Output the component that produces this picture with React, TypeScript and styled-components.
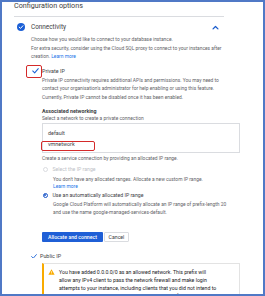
import React from "react";
import styled, { createGlobalStyle } from "styled-components";

const Global = createGlobalStyle`
  html, body { margin: 0; padding: 0; background: #fff; }
  body { font-family: Roboto, "Liberation Sans", Arial, sans-serif; }
  * { box-sizing: border-box; }
`;

const Frame = styled.div`
  width: 265px;
  height: 296px;
  border: 2px solid #5079c6;
  background: #fff;
  overflow: hidden;
  padding: 0 0 0 12px;
`;

const Title = styled.div`
  font-size: 7.2px;
  line-height: 8px;
  color: #3c4043;
  margin-top: 0;
`;

const Divider = styled.div`
  width: 210px;
  height: 1px;
  background: #dadce0;
  margin-top: 6px;
`;

const Section = styled.div`
  width: 210px;
  padding-left: 3px;
`;

const SectionHeader = styled.div`
  display: flex;
  align-items: center;
  height: 10px;
  margin-top: 5px;
  gap: 6px;
`;

const SectionTitle = styled.div`
  flex: 1;
  font-size: 6.4px;
  color: #3c4043;
`;

const Chevron = styled.svg`
  width: 7px;
  height: 5px;
  margin-right: 5px;
`;

const Body = styled.div`
  padding-left: 14px;
`;

const Desc = styled.div`
  font-size: 4.9px;
  line-height: 8.5px;
  color: #5f6368;
  margin-top: 3px;
  white-space: nowrap;
`;

const Link = styled.span`
  color: #1a73e8;
`;

const CheckRow = styled.div<{ $mt: number; $indent: number; $gap: number }>`
  position: relative;
  display: flex;
  align-items: center;
  height: 8px;
  margin-top: ${(p) => p.$mt}px;
  padding-left: ${(p) => p.$indent}px;
  gap: ${(p) => p.$gap}px;
  font-size: 5.4px;
  color: #3c4043;
`;

const Highlight = styled.div<{ $l: number; $t: number; $w: number; $h: number }>`
  position: absolute;
  left: ${(p) => p.$l}px;
  top: ${(p) => p.$t}px;
  width: ${(p) => p.$w}px;
  height: ${(p) => p.$h}px;
  border: 1.4px solid #d42a2a;
  border-radius: 2px;
  pointer-events: none;
`;

const Nested = styled.div`
  margin-left: 11px;
`;

const Para = styled.div<{ $mt: number; $lh: number; $color?: string; $indent?: number }>`
  font-size: 4.9px;
  line-height: ${(p) => p.$lh}px;
  margin-top: ${(p) => p.$mt}px;
  margin-left: ${(p) => p.$indent ?? 0}px;
  color: ${(p) => p.$color ?? "#5f6368"};
  white-space: nowrap;
`;

const SubHeading = styled.div`
  font-size: 5.3px;
  line-height: 7px;
  font-weight: 700;
  color: #3c4043;
  margin-top: 6.25px;
`;

const SelectBox = styled.div`
  width: 198px;
  height: 30px;
  border: 1px solid #dadce0;
  margin-top: 2.5px;
  padding: 4px 0 0 5px;
`;

const Option = styled.div`
  position: relative;
  height: 10.5px;
  line-height: 10.5px;
  font-size: 5.4px;
  color: #3c4043;
`;

const RadioRow = styled.div<{ $mt: number; $disabled?: boolean }>`
  display: flex;
  align-items: center;
  gap: 5px;
  height: 7px;
  margin-top: ${(p) => p.$mt}px;
  padding-left: 0.5px;
  font-size: 5.2px;
  color: ${(p) => (p.$disabled ? "#bdc1c6" : "#3c4043")};
`;

const Radio = styled.span<{ $checked?: boolean; $disabled?: boolean }>`
  width: 5px;
  height: 5px;
  border-radius: 50%;
  border: 0.8px solid ${(p) => (p.$disabled ? "#dadce0" : "#1a56c8")};
  display: flex;
  align-items: center;
  justify-content: center;
  &::after {
    content: "";
    width: 2.6px;
    height: 2.6px;
    border-radius: 50%;
    background: ${(p) => (p.$checked ? "#1a56c8" : "transparent")};
  }
`;

const Buttons = styled.div`
  display: flex;
  margin-top: 16px;
  gap: 1px;
`;

const PrimaryButton = styled.button`
  width: 61px;
  height: 10px;
  padding: 0;
  border: none;
  border-radius: 1px;
  background: #1f5fd6;
  color: #fff;
  font-family: inherit;
  font-size: 5.2px;
  font-weight: 500;
`;

const SecondaryButton = styled.button`
  width: 25px;
  height: 10px;
  padding: 0;
  border: 0.8px solid #dadce0;
  border-radius: 1px;
  background: #fff;
  color: #3c4043;
  font-family: inherit;
  font-size: 5.2px;
`;

const Warning = styled.div`
  display: flex;
  gap: 4px;
  width: 198px;
  margin-top: 3px;
  margin-left: 11px;
  border: 0.8px solid #e3e3e3;
  border-left: 2px solid #f9ab00;
  padding: 4px 0 0 4px;
`;

const WarnText = styled.div`
  font-size: 5.2px;
  line-height: 8px;
  color: #202124;
  white-space: nowrap;
`;

const CheckIcon = ({ size = 6 }: { size?: number }) => (
  <svg width={size} height={size * 0.8} viewBox="0 0 10 8">
    <path d="M1 4.2 L3.8 7 L9 1" fill="none" stroke="#1a62d6" strokeWidth="1.5" strokeLinecap="round" strokeLinejoin="round" />
  </svg>
);

export default function App() {
  return (
    <>
      <Global />
      <Frame>
        <Title>Configuration options</Title>
        <Divider />
        <Section>
          <SectionHeader>
            <svg width="8" height="8" viewBox="0 0 16 16">
              <circle cx="8" cy="8" r="8" fill="#1b5fd6" />
              <path d="M4.3 8.2 L7 10.8 L11.8 5.5" fill="none" stroke="#fff" strokeWidth="2" strokeLinecap="round" strokeLinejoin="round" />
            </svg>
            <SectionTitle>Connectivity</SectionTitle>
            <Chevron viewBox="0 0 10 7">
              <path d="M1.5 5.5 L5 2 L8.5 5.5" fill="none" stroke="#1a5ccc" strokeWidth="1.8" strokeLinecap="round" strokeLinejoin="round" />
            </Chevron>
          </SectionHeader>
          <Body>
            <Desc>
              Choose how you would like to connect to your database instance.
              <br />
              For extra security, consider using the Cloud SQL proxy to connect to your instances after
              <br />
              creation. <Link>Learn more</Link>
            </Desc>
          </Body>
          <CheckRow $mt={6.5} $indent={15} $gap={3}>
            <CheckIcon size={7} />
            <span>Private IP</span>
            <Highlight $l={9} $t={-2} $w={16} $h={13} />
          </CheckRow>
          <Body>
            <Nested>
              <Para $mt={0.75} $lh={8.5}>
                Private IP connectivity requires additional APIs and permissions. You may need to
                <br />
                contact your organisation's administrator for help enabling or using this feature.
                <br />
                Currently, Private IP cannot be disabled once it has been enabled.
              </Para>
              <SubHeading>Associated networking</SubHeading>
              <Para $mt={0} $lh={6}>Select a network to create a private connection</Para>
              <SelectBox>
                <Option>default</Option>
                <Option>
                  vmnetwork
                  <Highlight $l={-7} $t={2} $w={54} $h={10} />
                </Option>
              </SelectBox>
              <Para $mt={2} $lh={6}>Create a service connection by providing an allocated IP range.</Para>
              <RadioRow $mt={4.5} $disabled>
                <Radio $disabled />
                <span>Select the IP range</span>
              </RadioRow>
              <Para $mt={3} $lh={7} $indent={11}>
                You don't have any allocated ranges. Allocate a new custom IP range.
                <br />
                <Link>Learn more</Link>
              </Para>
              <RadioRow $mt={2}>
                <Radio $checked />
                <span>Use an automatically allocated IP range</span>
              </RadioRow>
              <Para $mt={1.5} $lh={8} $indent={11}>
                Google Cloud Platform will automatically allocate an IP range of prefix-length 20
                <br />
                and use the name google-managed-services-default.
              </Para>
              <Buttons>
                <PrimaryButton>Allocate and connect</PrimaryButton>
                <SecondaryButton>Cancel</SecondaryButton>
              </Buttons>
            </Nested>
          </Body>
          <CheckRow $mt={10} $indent={14} $gap={3}>
            <CheckIcon size={6} />
            <span>Public IP</span>
          </CheckRow>
          <Body>
            <Warning>
              <svg width="7" height="6" viewBox="0 0 24 21" style={{ flex: "none", marginTop: 1 }}>
                <path d="M12 1 L23 20 L1 20 Z" fill="#f9ab00" />
                <rect x="11" y="7.5" width="2" height="7" fill="#fff" />
                <rect x="11" y="16" width="2" height="2" fill="#fff" />
              </svg>
              <WarnText>
                You have added 0.0.0.0/0 as an allowed network. This prefix will
                <br />
                allow any IPv4 client to pass the network firewall and make login
                <br />
                attempts to your instance, including clients that you did not intend to
                <br />
                allow. Clients still need valid credentials to successfully log in.
              </WarnText>
            </Warning>
          </Body>
        </Section>
      </Frame>
    </>
  );
}
